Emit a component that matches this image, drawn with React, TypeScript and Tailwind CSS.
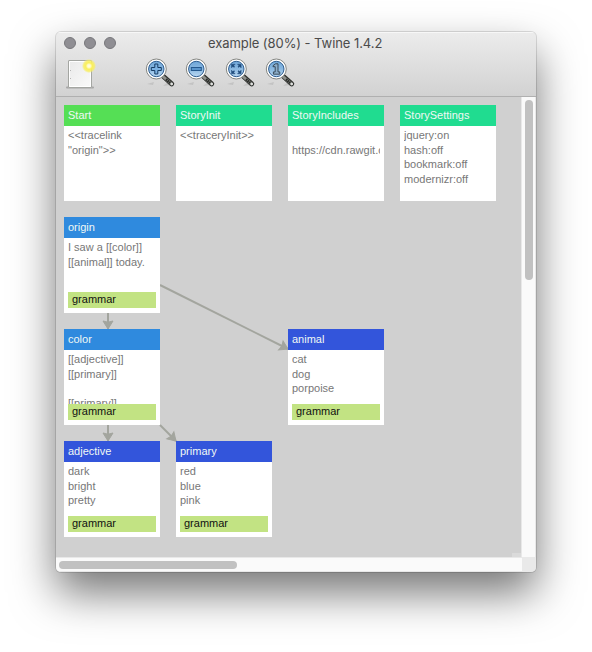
import React from 'react';

type Passage = {
  title: string;
  lines: string[];
  place: string;
  color: string;
  tag?: string;
};

const passages: Passage[] = [
  { title: 'Start', lines: ['<<tracelink', '"origin">>'], place: 'left-[8px] top-[8px]', color: 'bg-[#55df55]' },
  { title: 'StoryInit', lines: ['<<traceryInit>>'], place: 'left-[120px] top-[8px]', color: 'bg-[#20dc90]' },
  { title: 'StoryIncludes', lines: ['', 'https://cdn.rawgit.com'], place: 'left-[232px] top-[8px]', color: 'bg-[#20dc90]' },
  { title: 'StorySettings', lines: ['jquery:on', 'hash:off', 'bookmark:off', 'modernizr:off'], place: 'left-[344px] top-[8px]', color: 'bg-[#20dc90]' },
  { title: 'origin', lines: ['I saw a [[color]]', '[[animal]] today.'], place: 'left-[8px] top-[120px]', color: 'bg-[#2f8ade]', tag: 'grammar' },
  { title: 'color', lines: ['[[adjective]]', '[[primary]]', '', '[[primary]]'], place: 'left-[8px] top-[232px]', color: 'bg-[#2f8ade]', tag: 'grammar' },
  { title: 'animal', lines: ['cat', 'dog', 'porpoise'], place: 'left-[232px] top-[232px]', color: 'bg-[#3355db]', tag: 'grammar' },
  { title: 'adjective', lines: ['dark', 'bright', 'pretty'], place: 'left-[8px] top-[344px]', color: 'bg-[#3355db]', tag: 'grammar' },
  { title: 'primary', lines: ['red', 'blue', 'pink'], place: 'left-[120px] top-[344px]', color: 'bg-[#3355db]', tag: 'grammar' },
];

function PassageCard({ title, lines, place, color, tag }: Passage) {
  return (
    <div className={`absolute flex h-24 w-24 flex-col bg-white pb-[5px] text-[11px] ${place}`}>
      <div className={`h-[21px] shrink-0 px-1 leading-[21px] text-[#f0f8f4] ${color}`}>{title}</div>
      <div className="mx-1 min-h-0 flex-1 overflow-hidden pt-[2px] leading-[14.6px] text-[#777]">
        {lines.map((line, i) => (
          <div key={i} className="h-[14.6px] whitespace-nowrap">{line}</div>
        ))}
      </div>
      {tag && <div className="mx-1 h-4 shrink-0 bg-[#c2e383] px-1 leading-[15px] text-[#111]">{tag}</div>}
    </div>
  );
}

function Arrow({ x1, y1, x2, y2 }: { x1: number; y1: number; x2: number; y2: number }) {
  const angle = (Math.atan2(y2 - y1, x2 - x1) * 180) / Math.PI;
  return (
    <g>
      <line x1={x1} y1={y1} x2={x2} y2={y2} stroke="#a3a59e" strokeWidth="2" />
      <path d="M0 0L-8 -5L-6.8 0L-8 5Z" fill="#a3a59e" stroke="#a3a59e" transform={`translate(${x2} ${y2}) rotate(${angle})`} />
    </g>
  );
}

function NewPassageIcon() {
  return (
    <svg width="32" height="32" viewBox="0 0 32 32">
      <defs>
        <linearGradient id="paper" x1="0" y1="0" x2="1" y2="1">
          <stop offset="0" stopColor="#e9e9e9" />
          <stop offset="1" stopColor="#fafafa" />
        </linearGradient>
        <radialGradient id="glow">
          <stop offset="0" stopColor="#fffef0" />
          <stop offset=".25" stopColor="#fffac0" />
          <stop offset=".45" stopColor="#fbf05a" />
          <stop offset=".75" stopColor="#f8ee60" stopOpacity=".8" />
          <stop offset="1" stopColor="#f6f080" stopOpacity="0" />
        </radialGradient>
      </defs>
      <path d="M3 30.5H29" stroke="#777" strokeOpacity=".5" strokeWidth="2" strokeLinecap="round" />
      <rect x="4.5" y="3.5" width="23" height="27" rx=".5" fill="url(#paper)" stroke="#a4a6a2" />
      <path d="M5.5 29.5V4.5H26.5V29.5Z" fill="none" stroke="#fff" />
      <path d="M6.5 13v1M6.5 21v1" stroke="#b5b5b5" />
      <circle cx="25" cy="9" r="7.2" fill="url(#glow)" />
    </svg>
  );
}

function Magnifier({ children }: { children: React.ReactNode }) {
  return (
    <svg width="32" height="32" viewBox="0 0 32 32">
      <defs>
        <linearGradient id="lens" x1="0" y1="0" x2="0" y2="1">
          <stop offset="0" stopColor="#6ea6d8" />
          <stop offset=".5" stopColor="#8bb9e1" />
          <stop offset="1" stopColor="#b9d8f2" />
        </linearGradient>
      </defs>
      <path d="M3 27L10 25L9 28ZM19 29L24 25L27 28Z" fill="#a6a6a6" opacity=".4" />
      <path d="M19.5 19.5L27.7 26.9" stroke="#30322f" strokeWidth="5" strokeLinecap="round" />
      <path d="M19 19.5L27.5 26.9" stroke="#8d8f8b" strokeWidth="2.8" strokeLinecap="round" />
      <path d="M22 22.2L26.2 26" stroke="#2b2d2a" strokeWidth="2.6" strokeDasharray="1.6 .5" />
      <circle cx="27.8" cy="27" r="1.2" fill="#e0e1df" />
      <circle cx="12.3" cy="12" r="10" fill="#fff" stroke="#858783" strokeWidth="1" />
      <circle cx="12.3" cy="12" r="7.7" fill="url(#lens)" stroke="#305f92" strokeWidth="1" />
      <g transform="translate(0 -.5)">{children}</g>
    </svg>
  );
}

function TrafficLight() {
  return <div className="h-3 w-3 rounded-full border border-[#77777b] bg-[#8f8e93]" />;
}

export default function App() {
  return (
    <div className="h-[652px] w-[592px] overflow-hidden bg-white pl-[56px] pt-[32px] font-['Liberation_Sans',Arial,sans-serif]">
      <div className="h-[540px] w-[480px] rounded-[5px] shadow-[0_0_0_1px_rgba(0,0,0,0.12),0_21px_44px_rgba(0,0,0,0.54)]">
        <div className="flex h-[540px] w-[480px] flex-col overflow-hidden rounded-[5px] bg-[#d0d0d0]">
          <header className="h-[65px] shrink-0 border-b border-[#b0b0b0] bg-gradient-to-b from-[#ececec] to-[#d2d2d2] shadow-[inset_0_1px_0_#f7f7f7]">
            <div className="flex h-[25px] items-start pt-[5px]">
              <div className="flex w-[152px] gap-2 pl-2">
                <TrafficLight />
                <TrafficLight />
                <TrafficLight />
              </div>
              <div className="whitespace-nowrap font-['Inter',sans-serif] text-[13px] leading-[13px] tracking-[-0.07px] text-[#4b4b4b]">
                example (80%) - Twine 1.4.2
              </div>
            </div>
            <div className="flex h-8 pl-2">
              <div className="w-20">
                <NewPassageIcon />
              </div>
              <div className="flex gap-2">
                <Magnifier>
                  <path d="M10.8 7.5h3v3.5h3.5v3h-3.5v3.5h-3V14H7.3v-3h3.5Z" fill="#7bb1e2" stroke="#173c64" />
                </Magnifier>
                <Magnifier>
                  <rect x="7.3" y="11" width="10" height="3" fill="#5b96cd" stroke="#24588d" />
                </Magnifier>
                <Magnifier>
                  <path d="M7.5 7.7h3.6L7.5 11.3ZM17.1 7.7h-3.6l3.6 3.6ZM7.5 17.3h3.6l-3.6-3.6ZM17.1 17.3h-3.6l3.6-3.6Z" fill="#214d7d" stroke="#214d7d" strokeWidth=".5" />
                  <path d="M8.5 8.7l2 2M16.1 8.7l-2 2M8.5 16.3l2-2M16.1 16.3l-2-2" stroke="#214d7d" strokeWidth="1.3" />
                </Magnifier>
                <Magnifier>
                  <path d="M9 9.2L11.5 7.3H14V15.4H15.8V17.7H9.4V15.4H11.2V10.2H9Z" fill="#8badca" stroke="#303f4d" strokeWidth=".9" />
                </Magnifier>
              </div>
            </div>
          </header>
          <div className="flex h-[460px] shrink-0">
            <main className="relative w-[465px] overflow-hidden bg-[#d0d0d0]">
              <svg className="absolute left-0 top-0" width="465" height="460" viewBox="0 0 465 460">
                <Arrow x1={52} y1={216} x2={52} y2={232} />
                <Arrow x1={52} y1={328} x2={52} y2={344} />
                <Arrow x1={104} y1={188} x2={232} y2={252} />
                <Arrow x1={104} y1={328} x2={120} y2={344} />
              </svg>
              {passages.map((passage) => (
                <PassageCard key={passage.title} {...passage} />
              ))}
              <div className="absolute bottom-0 right-0 h-1 w-[9px] bg-[#dadada]" />
            </main>
            <div className="w-[15px] border-x border-[#e8e8e8] bg-[#fafafa] pl-[3px] pt-[3px]">
              <div className="h-[180px] w-2 rounded-full bg-[#c1c1c1]" />
            </div>
          </div>
          <div className="flex h-[15px] shrink-0">
            <div className="w-[466px] border-y border-[#e8e8e8] bg-[#fafafa] pl-[3px] pt-[3px]">
              <div className="h-2 w-[178px] rounded-full bg-[#c1c1c1]" />
            </div>
            <div className="flex-1 bg-[#e9e9e9]" />
          </div>
        </div>
      </div>
    </div>
  );
}
